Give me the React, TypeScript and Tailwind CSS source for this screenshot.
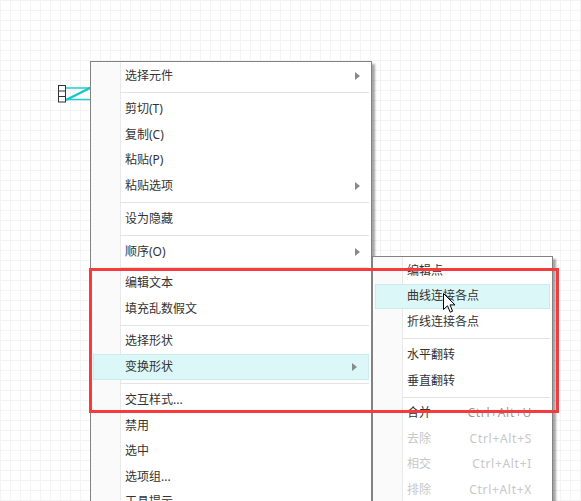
import React from 'react';

type Row =
  | { label: string; arrow?: boolean; active?: boolean; disabled?: boolean; shortcut?: string }
  | { sep: number };

const MAIN: Row[] = [
  { label: '选择元件', arrow: true },
  { sep: 8 },
  { label: '剪切(T)' },
  { label: '复制(C)' },
  { label: '粘贴(P)' },
  { label: '粘贴选项', arrow: true },
  { sep: 8 },
  { label: '设为隐藏' },
  { sep: 7 },
  { label: '顺序(O)', arrow: true },
  { sep: 6 },
  { label: '编辑文本' },
  { label: '填充乱数假文' },
  { sep: 7 },
  { label: '选择形状' },
  { label: '变换形状', arrow: true, active: true },
  { sep: 8 },
  { label: '交互样式...' },
  { label: '禁用' },
  { label: '选中' },
  { label: '选项组...' },
  { label: '工具提示...' },
];

const SUB: Row[] = [
  { label: '编辑点' },
  { label: '曲线连接各点', active: true },
  { label: '折线连接各点' },
  { sep: 8 },
  { label: '水平翻转' },
  { label: '垂直翻转' },
  { sep: 7 },
  { label: '合并', shortcut: 'Ctrl+Alt+U' },
  { label: '去除', shortcut: 'Ctrl+Alt+S', disabled: true },
  { label: '相交', shortcut: 'Ctrl+Alt+I', disabled: true },
  { label: '排除', shortcut: 'Ctrl+Alt+X', disabled: true },
];

function Arrow() {
  return (
    <svg width="5" height="8" viewBox="0 0 5 8" className="shrink-0">
      <path d="M0 0 L5 4 L0 8 Z" fill="#8a8a8a" />
    </svg>
  );
}

function MenuRows({ rows, arrowPad, shortcutPad }: { rows: Row[]; arrowPad: string; shortcutPad: string }) {
  return (
    <>
      {rows.map((r, i) => {
        if ('sep' in r) {
          return (
            <div key={i} className="flex items-center pl-[29px] pr-[2px]" style={{ height: r.sep }}>
              <div className="h-px w-full bg-[#e3e3e3]" />
            </div>
          );
        }
        return (
          <div
            key={i}
            className={`flex h-[25.5px] items-center justify-between ${
              r.active
                ? 'mx-[2px] border border-[#c9eded] bg-[#dcf7f7] pl-[31px]'
                : 'pl-[34px]'
            } ${r.arrow ? arrowPad : r.shortcut ? shortcutPad : ''}`}
          >
            <span className={r.disabled ? 'text-[#c8c8c8]' : 'text-[#333333]'}>{r.label}</span>
            {r.arrow && <Arrow />}
            {r.shortcut && (
              <span className={`tracking-[0.7px] ${r.disabled ? 'text-[#c8c8c8]' : 'text-[#9a9a9a]'}`}>
                {r.shortcut}
              </span>
            )}
          </div>
        );
      })}
    </>
  );
}

export default function App() {
  return (
    <div
      className="relative h-[501px] w-[581px] overflow-hidden bg-white bg-[linear-gradient(to_right,#f3f3f3_1px,transparent_1px),linear-gradient(to_bottom,#f3f3f3_1px,transparent_1px)] bg-[size:10px_10px] text-[12px]"
      style={{ fontFamily: '"Noto Sans", "Noto Sans CJK SC", sans-serif' }}
    >
      {/* canvas shape behind the menu */}
      <svg className="absolute left-0 top-0" width="581" height="501">
        <line x1="66" y1="88" x2="91" y2="88" stroke="#1ccfd0" strokeWidth="1.5" />
        <line x1="66" y1="99.5" x2="91" y2="99.5" stroke="#1ccfd0" strokeWidth="1.5" />
        <line x1="66" y1="100" x2="91" y2="87.5" stroke="#14c4c6" strokeWidth="2.2" />
        <rect x="58.5" y="85.5" width="7" height="16.5" fill="white" stroke="#333" strokeWidth="1" />
        <line x1="58.5" y1="91" x2="65.5" y2="91" stroke="#333" strokeWidth="1" />
        <line x1="58.5" y1="96.5" x2="65.5" y2="96.5" stroke="#333" strokeWidth="1" />
      </svg>

      {/* main context menu */}
      <div className="absolute left-[90px] top-[61px] h-[520px] w-[282px] border border-[#828282] bg-[linear-gradient(to_right,#fafafa_29px,#e9e9e9_29px,#e9e9e9_30px,#ffffff_30px)] pt-px shadow-[3px_3px_2px_rgba(0,0,0,0.35)]">
        <MenuRows rows={MAIN} arrowPad="pr-[11px]" shortcutPad="" />
      </div>

      {/* submenu */}
      <div className="absolute left-[372px] top-[256px] h-[300px] w-[181px] border border-[#828282] bg-[linear-gradient(to_right,#fafafa_29px,#e9e9e9_29px,#e9e9e9_30px,#ffffff_30px)] pt-px shadow-[3px_3px_2px_rgba(0,0,0,0.35)]">
        <MenuRows rows={SUB} arrowPad="pr-[11px]" shortcutPad="pr-[20px]" />
      </div>

      {/* mouse pointer */}
      <svg className="absolute left-[443px] top-[293px]" width="13" height="21" viewBox="0 0 13 21">
        <path
          d="M0.5 0.5 L0.5 16.5 L4.5 12.8 L7.2 19.2 L9.6 18.2 L7 11.9 L12 11.9 Z"
          fill="white"
          stroke="black"
          strokeWidth="1"
          strokeLinejoin="round"
        />
      </svg>

      {/* red annotation box */}
      <div className="absolute left-[89px] top-[268px] h-[145px] w-[470px] border-[3.5px] border-[#f53b3b]" />
    </div>
  );
}
